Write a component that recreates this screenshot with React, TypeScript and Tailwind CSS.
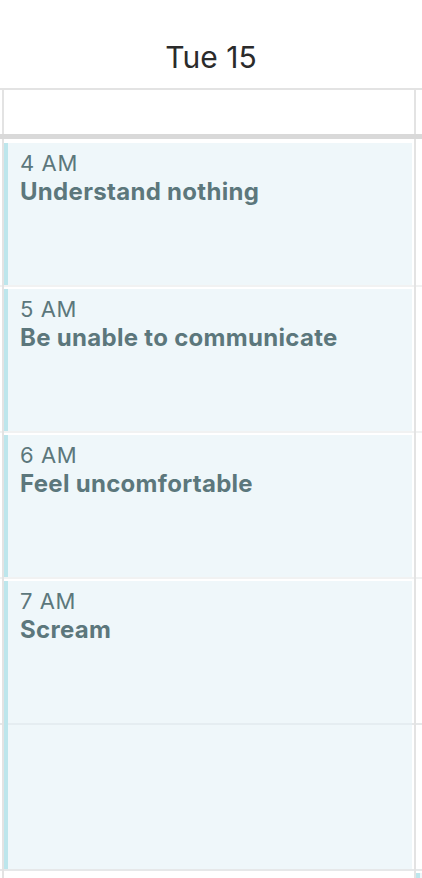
type CalEvent = {
  time: string;
  title: string;
  start: number;
  hours: number;
};

const ROW = 146;

const events: CalEvent[] = [
  { time: "4 AM", title: "Understand nothing", start: 0, hours: 1 },
  { time: "5 AM", title: "Be unable to communicate", start: 1, hours: 1 },
  { time: "6 AM", title: "Feel uncomfortable", start: 2, hours: 1 },
  { time: "7 AM", title: "Scream", start: 3, hours: 2 },
];

const rowLines = ["border-[#f1f2f2]", "border-[#f1f2f2]", "border-[#f1f2f2]", "border-[#e6e8e9]", "border-[#e6e8e9]", "border-[#e6e8e9]"];

function HourRows() {
  return (
    <>
      {rowLines.map((line, i) => (
        <div key={i} className={`h-[146px] shrink-0 border-b-2 ${line}`} />
      ))}
    </>
  );
}

function EventBlock({ event }: { event: CalEvent }) {
  return (
    <div
      className="absolute left-0 right-[2px] flex border-l-4 border-[#bde6ec] bg-[rgba(228,241,246,0.58)] pl-[12px] pt-[6px]"
      style={{ top: event.start * ROW + 2, height: event.hours * ROW - 4 }}
    >
      <div className="flex flex-col text-[#5c777c]">
        <span className="text-[22px] leading-[28px] tracking-[0.6px]">{event.time}</span>
        <span className="text-[24px] font-bold leading-[30px] tracking-[0.3px]">{event.title}</span>
      </div>
    </div>
  );
}

export default function App() {
  return (
    <div
      className="h-[878px] w-[422px] overflow-hidden bg-white"
      style={{ fontFamily: "Inter, 'Noto Sans', sans-serif" }}
    >
      <div className="h-[88px] pt-[39px] text-center text-[30px] leading-[36px] text-[#2b2b2b]">Tue 15</div>
      <div className="h-[2px] bg-[#e3e3e3]" />
      <div className="flex h-[44px]">
        <div className="w-[2px] shrink-0" />
        <div className="w-[414px] shrink-0 border-x-2 border-[#e3e3e3]" />
        <div className="flex-1" />
      </div>
      <div className="h-[5px] bg-[#d9d9d9]" />
      <div className="flex">
        <div className="flex w-[2px] shrink-0 flex-col">
          <div className="h-[2px]" />
          <HourRows />
        </div>
        <div className="flex w-[414px] shrink-0 flex-col border-x-2 border-[#e3e3e3]">
          <div className="h-[2px]" />
          <div className="relative flex flex-col">
            <HourRows />
            {events.map((e) => (
              <EventBlock key={e.time} event={e} />
            ))}
          </div>
        </div>
        <div className="flex flex-1 flex-col">
          <div className="h-[2px]" />
          <div className="relative flex flex-col">
            <HourRows />
            <div
              className="absolute left-0 right-0 border-l-4 border-[#bde6ec] bg-[rgba(228,241,246,0.58)]"
              style={{ top: 5 * ROW + 2, height: ROW - 4 }}
            />
          </div>
        </div>
      </div>
    </div>
  );
}
